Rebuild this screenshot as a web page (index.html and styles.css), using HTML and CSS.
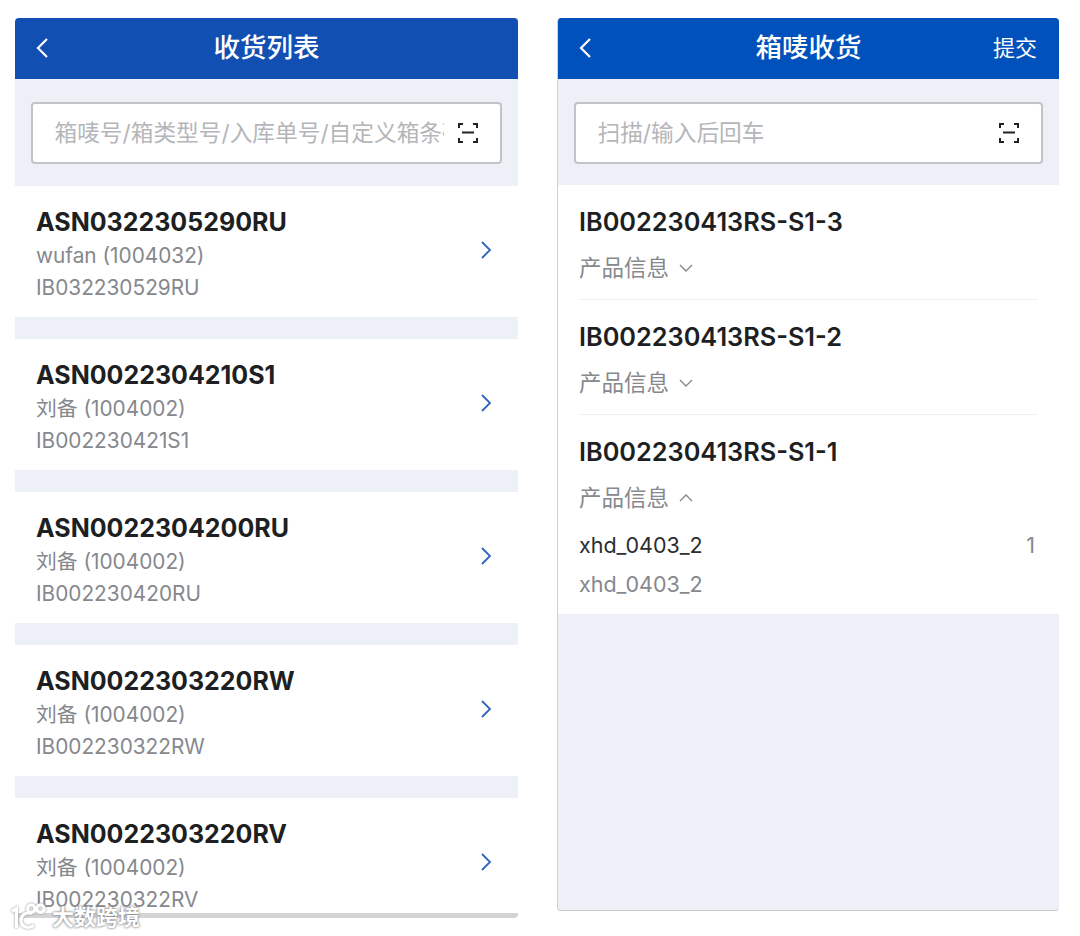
FILE: index.html
```html
<!DOCTYPE html>
<html lang="zh-CN">
<head>
    <meta charset="UTF-8">
    <meta name="viewport" content="width=device-width, initial-scale=1.0">
    <title>收货</title>
    <link rel="stylesheet" href="styles.css">
</head>
<body>
    <section class="phone phone-list">
        <header class="topbar topbar-list">
            <svg class="back" viewBox="0 0 14 22"><path d="M12 2 L3 11 L12 20"/></svg>
            <h1>收货列表</h1>
        </header>
        <div class="search-wrap">
            <div class="search">
                <span class="placeholder">箱唛号/箱类型号/入库单号/自定义箱条码</span>
                <svg class="scan" viewBox="0 0 20 20"><path d="M1 5V1H5M15 1H19V5M1 15V19H5M15 19H19V15M4 9.5H16"/></svg>
            </div>
        </div>
        <div class="asn-list">
            <div class="asn">
                <div class="asn-text">
                    <div class="asn-no">ASN0322305290RU</div>
                    <div class="asn-sub">wufan (1004032)</div>
                    <div class="asn-sub">IB032230529RU</div>
                </div>
                <svg class="go" viewBox="0 0 12 20"><path d="M2 2 L10 10 L2 18"/></svg>
            </div>
            <div class="asn">
                <div class="asn-text">
                    <div class="asn-no">ASN0022304210S1</div>
                    <div class="asn-sub">刘备 (1004002)</div>
                    <div class="asn-sub">IB002230421S1</div>
                </div>
                <svg class="go" viewBox="0 0 12 20"><path d="M2 2 L10 10 L2 18"/></svg>
            </div>
            <div class="asn">
                <div class="asn-text">
                    <div class="asn-no">ASN0022304200RU</div>
                    <div class="asn-sub">刘备 (1004002)</div>
                    <div class="asn-sub">IB002230420RU</div>
                </div>
                <svg class="go" viewBox="0 0 12 20"><path d="M2 2 L10 10 L2 18"/></svg>
            </div>
            <div class="asn">
                <div class="asn-text">
                    <div class="asn-no">ASN0022303220RW</div>
                    <div class="asn-sub">刘备 (1004002)</div>
                    <div class="asn-sub">IB002230322RW</div>
                </div>
                <svg class="go" viewBox="0 0 12 20"><path d="M2 2 L10 10 L2 18"/></svg>
            </div>
            <div class="asn">
                <div class="asn-text">
                    <div class="asn-no">ASN0022303220RV</div>
                    <div class="asn-sub">刘备 (1004002)</div>
                    <div class="asn-sub">IB002230322RV</div>
                </div>
                <svg class="go" viewBox="0 0 12 20"><path d="M2 2 L10 10 L2 18"/></svg>
            </div>
        </div>
    </section>

    <section class="phone phone-box">
        <header class="topbar topbar-box">
            <svg class="back" viewBox="0 0 14 22"><path d="M12 2 L3 11 L12 20"/></svg>
            <h1>箱唛收货</h1>
            <span class="submit">提交</span>
        </header>
        <div class="search-wrap">
            <div class="search">
                <span class="placeholder">扫描/输入后回车</span>
                <svg class="scan" viewBox="0 0 20 20"><path d="M1 5V1H5M15 1H19V5M1 15V19H5M15 19H19V15M4 9.5H16"/></svg>
            </div>
        </div>
        <div class="box-list">
            <div class="box">
                <div class="box-no">IB002230413RS-S1-3</div>
                <div class="box-info">产品信息 <svg class="fold" viewBox="0 0 14 8"><path d="M1 1 L7 7 L13 1"/></svg></div>
            </div>
            <div class="box">
                <div class="box-no">IB002230413RS-S1-2</div>
                <div class="box-info">产品信息 <svg class="fold" viewBox="0 0 14 8"><path d="M1 1 L7 7 L13 1"/></svg></div>
            </div>
            <div class="box box-open">
                <div class="box-no">IB002230413RS-S1-1</div>
                <div class="box-info">产品信息 <svg class="fold" viewBox="0 0 14 8"><path d="M1 7 L7 1 L13 7"/></svg></div>
                <div class="sku">
                    <span class="sku-code">xhd_0403_2</span>
                    <span class="sku-qty">1</span>
                </div>
                <div class="sku-name">xhd_0403_2</div>
            </div>
        </div>
    </section>

    <div class="watermark">
        <svg class="wm-logo" viewBox="0 0 40 30"><path d="M3 9 L8 6 V27 M25 11 C17 9 12 14 13 20 C14 26 22 28 27 24"/><circle cx="24" cy="6" r="4"/><circle cx="34" cy="6" r="4"/></svg>
        <span class="wm-text">大数跨境</span>
    </div>
</body>
</html>
```

FILE: styles.css
```css
:root {
    --page: #eef0f7;
    --title: #1d1f22;
    --muted: #85888d;
    --ui-font: Inter, "Noto Sans CJK SC", sans-serif;
}
* { box-sizing: border-box; margin: 0; padding: 0; }
body {
    font-family: var(--ui-font);
    background: #fff;
    height: 936px;
    overflow: hidden;
    position: relative;
    display: flex;
    align-items: flex-start;
    gap: 39px;
    padding: 18px 0 0 15px;
}
.phone {
    background: var(--page);
    overflow: hidden;
}
.phone-list {
    width: 503px;
    height: 900px;
    border-bottom: 5px solid #d4d4d6;
    border-radius: 4px;
}
.phone-box {
    width: 502px;
    height: 893px;
    border-left: 1px solid #d0d0d3;
    border-bottom: 1px solid #c9c9cc;
    border-radius: 4px;
}
.topbar {
    height: 61px;
    display: flex;
    align-items: center;
    justify-content: center;
    position: relative;
    color: #fff;
}
.topbar-list { background: #114fb3; }
.topbar-box { background: #0051bb; }
.topbar h1 {
    font-size: 26.5px;
    font-weight: 500;
    line-height: 58px;
    margin-bottom: 3px;
}
.back {
    position: absolute;
    left: 20px;
    top: 19px;
    width: 14px;
    height: 22px;
    fill: none;
    stroke: #fff;
    stroke-width: 2.2;
}
.submit {
    position: absolute;
    right: 22px;
    top: 14px;
    font-size: 22px;
    line-height: 32px;
}
.search-wrap {
    height: 107px;
    padding: 23px 16px 0;
}
.phone-box .search-wrap { height: 106px; }
.search {
    height: 62px;
    background: #fff;
    border: 2px solid #c2c3c6;
    border-radius: 4px;
    display: flex;
    align-items: center;
    padding: 0 13px 0 21.5px;
    gap: 14px;
}
.placeholder {
    flex: 1;
    font-size: 22.7px;
    line-height: 58px;
    color: #b5b6b9;
    white-space: nowrap;
    overflow: hidden;
}
.scan {
    width: 20px;
    height: 20px;
    flex-shrink: 0;
    margin-right: 9px;
    fill: none;
    stroke: #222;
    stroke-width: 2;
}
.asn-list {
    display: flex;
    flex-direction: column;
    gap: 22px;
}
.asn {
    height: 131px;
    background: #fff;
    display: flex;
    align-items: center;
    justify-content: space-between;
    padding: 0 26px 0 21px;
}
.asn-text { margin-top: 5px; }
.asn-no {
    font-size: 25px;
    font-weight: 700;
    line-height: 36px;
    color: var(--title);
}
.asn-sub {
    font-size: 20.8px;
    line-height: 32px;
    color: var(--muted);
}
.go {
    width: 12px;
    height: 20px;
    margin-bottom: 3px;
    fill: none;
    stroke: #2f63c0;
    stroke-width: 1.8;
}
.box-list {
    background: #fff;
    padding: 0 21px;
}
.box {
    height: 115px;
    padding-top: 20px;
    border-bottom: 1px solid #f0f0f2;
}
.box-open {
    height: 199px;
    border-bottom: 0;
}
.box-no {
    font-size: 25.3px;
    font-weight: 600;
    line-height: 34px;
    color: var(--title);
}
.box-info {
    margin-top: 13px;
    font-size: 22.5px;
    line-height: 32px;
    color: var(--muted);
    display: flex;
    align-items: center;
    gap: 10px;
}
.fold {
    width: 14px;
    height: 8px;
    fill: none;
    stroke: var(--muted);
    stroke-width: 1.4;
}
.sku {
    margin-top: 15px;
    display: flex;
    justify-content: space-between;
    font-size: 21.5px;
    line-height: 32px;
    color: #2b2d30;
}
.sku-qty {
    color: var(--muted);
    padding-right: 3px;
}
.sku-name {
    margin-top: 7px;
    font-size: 21.5px;
    line-height: 32px;
    color: var(--muted);
}
.watermark {
    position: absolute;
    left: 9px;
    top: 902px;
    display: flex;
    align-items: center;
    gap: 6px;
    color: #fff;
    text-shadow: 0 0 2px #777, 0 0 3px #999;
}
.wm-logo {
    width: 37px;
    height: 30px;
    fill: none;
    stroke: #fff;
    stroke-width: 3.5;
    filter: drop-shadow(0 0 1px #888);
}
.wm-text {
    font-size: 22px;
    font-weight: 700;
    line-height: 30px;
}
```
